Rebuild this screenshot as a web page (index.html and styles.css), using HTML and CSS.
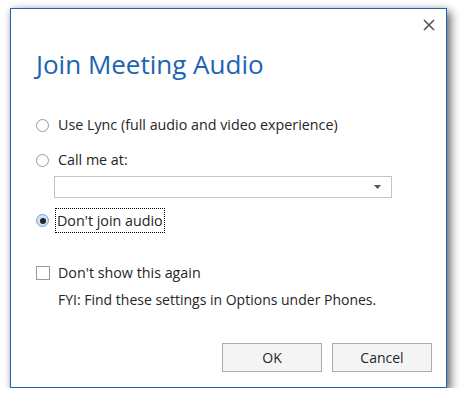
FILE: index.html
```html
<!DOCTYPE html>
<html>
<head>
<meta charset="utf-8">
<link rel="stylesheet" href="styles.css">
</head>
<body>
<div class="dialog">
  <div class="titlebar">
    <svg class="close" width="12" height="12" viewBox="0 0 12 12"><path d="M1 1 L11 11 M11 1 L1 11" stroke="#555" stroke-width="1.6" fill="none"/></svg>
  </div>
  <h1 class="title">Join Meeting Audio</h1>
  <div class="options">
    <label class="opt"><span class="radio"></span><span class="lbl">Use Lync (full audio and video experience)</span></label>
    <label class="opt opt-call"><span class="radio"></span><span class="lbl">Call me at:</span></label>
    <div class="combo"><svg class="arrow" width="7" height="5" viewBox="0 0 7 5"><path d="M0 0 H7 L3.5 4 Z" fill="#555"/></svg></div>
    <label class="opt opt-sel"><span class="radio checked"><span class="dot"></span></span><span class="lbl focus">Don't join audio</span></label>
  </div>
  <div class="check-row">
    <label class="opt"><span class="checkbox"></span><span class="lbl">Don't show this again</span></label>
    <div class="fyi">FYI: Find these settings in Options under Phones.</div>
  </div>
  <div class="buttons">
    <button class="btn">OK</button>
    <button class="btn">Cancel</button>
  </div>
</div>
</body>
</html>
```
FILE: styles.css
```css
html, body {
  margin: 0;
  padding: 0;
  background: #ffffff;
}
body {
  padding: 8px 0 0 10px;
  font-family: "Open Sans", "Noto Sans", sans-serif;
  color: #262626;
}
.dialog {
  box-sizing: border-box;
  width: 437px;
  height: 380px;
  border: 1px solid #1d62b4;
  background: #fff;
  box-shadow: 4px 4px 9px rgba(0,0,0,0.55), 0 0 6px rgba(0,0,0,0.15);
  display: flex;
  flex-direction: column;
  padding: 0 14px 0 25px;
}
.titlebar {
  display: flex;
  justify-content: flex-end;
  padding-top: 10px;
  height: 22px;
}
.close {
  display: block;
  margin-right: -3px;
}
.title {
  margin: 6px 0 0 0;
  font-weight: 400;
  font-size: 26px;
  line-height: 34px;
  color: #1c64b0;
  letter-spacing: 0;
}
.options {
  margin-top: 34px;
  display: flex;
  flex-direction: column;
}
.opt {
  display: flex;
  align-items: center;
  font-size: 14.3px;
  line-height: 20px;
  height: 20px;
}
.opt-call {
  margin-top: 15px;
}
.radio {
  box-sizing: border-box;
  width: 13px;
  height: 13px;
  border: 1px solid #9a9a9a;
  border-radius: 50%;
  background: #fff;
  margin-right: 9px;
  flex: none;
  display: flex;
  align-items: center;
  justify-content: center;
}
.radio.checked {
  border-color: #6aa3d9;
  background: #cfe3f6;
}
.dot {
  width: 6px;
  height: 6px;
  border-radius: 50%;
  background: #262626;
}
.combo {
  box-sizing: border-box;
  margin: 6px 0 0 18px;
  width: 338px;
  height: 22px;
  border: 1px solid #c4c4c4;
  display: flex;
  align-items: center;
  justify-content: flex-end;
  padding-right: 10px;
}
.opt-sel {
  margin-top: 10px;
  height: 25px;
}
.focus {
  outline: 1px dotted #000;
  padding: 2px 1px 1px 1px;
  margin-left: -2px;
  line-height: 20px;
}
.check-row {
  margin-top: 30px;
  display: flex;
  flex-direction: column;
}
.checkbox {
  box-sizing: border-box;
  width: 14px;
  height: 14px;
  border: 1px solid #9a9a9a;
  background: #fff;
  margin-right: 8px;
  flex: none;
}
.fyi {
  margin: 7px 0 0 22px;
  font-size: 14px;
  line-height: 20px;
}
.buttons {
  margin-top: auto;
  margin-bottom: 15px;
  display: flex;
  justify-content: flex-end;
  gap: 10px;
}
.btn {
  box-sizing: border-box;
  width: 100px;
  height: 29px;
  border: 1px solid #acacac;
  background: #f4f4f4;
  font-family: "Open Sans", "Noto Sans", sans-serif;
  font-size: 14px;
  color: #262626;
  padding: 0;
}
```
